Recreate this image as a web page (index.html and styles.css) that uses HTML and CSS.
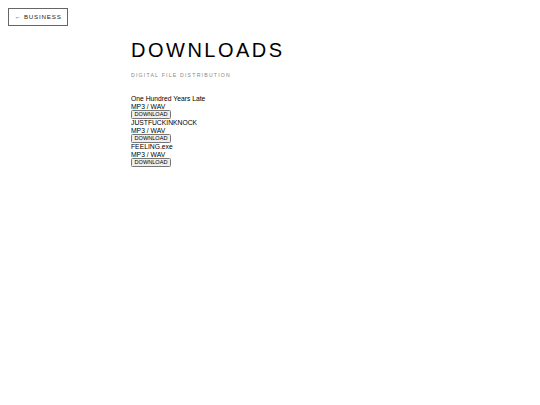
FILE: index.html
```html
<!DOCTYPE html>
<html>
<head>
    <title>Downloads</title>
    <link rel="stylesheet" href="styles.css">
</head>
<body>
    <a class="back" href="#">&larr; BUSINESS</a>

    <div class="page">
        <h1>DOWNLOADS</h1>
        <p class="subtitle">DIGITAL FILE DISTRIBUTION</p>

        <div class="files">
            <div class="file">
                <div>One Hundred Years Late</div>
                <div>MP3 / WAV</div>
                <button>DOWNLOAD</button>
            </div>
            <div class="file">
                <div>JUSTFUCKINKNOCK</div>
                <div>MP3 / WAV</div>
                <button>DOWNLOAD</button>
            </div>
            <div class="file">
                <div>FEELING.exe</div>
                <div>MP3 / WAV</div>
                <button>DOWNLOAD</button>
            </div>
        </div>
    </div>
</body>
</html>
```

FILE: styles.css
```css
body {
    font-family: "Liberation Sans", Arial, sans-serif;
    font-size: 6.75px;
    color: #000;
    background-color: #fff;
    margin: 0;
    padding: 8px 0 0 8px;
}
.back {
    display: inline-block;
    width: 60px;
    height: 18px;
    box-sizing: border-box;
    border: 1px solid #666;
    color: #222;
    text-decoration: none;
    font-size: 6.2px;
    letter-spacing: 0.8px;
    line-height: 16px;
    text-align: center;
}
.page {
    width: 278px;
    margin: 0 auto;
    padding-right: 8px;
}
h1 {
    font-size: 20px;
    font-weight: normal;
    letter-spacing: 2.5px;
    margin: 12px 0 0 0;
    line-height: 24px;
}
.subtitle {
    font-size: 5.2px;
    letter-spacing: 1.2px;
    color: #888;
    margin: 10px 0 17px 0;
}
.file div {
    line-height: 7.5px;
}
button {
    font-family: "Liberation Sans", Arial, sans-serif;
    font-size: 5.6px;
    line-height: 7px;
    background-color: #efefef;
    border: 1px solid #767676;
    border-radius: 1.5px;
    padding: 0 2.5px;
    color: #000;
    display: block;
}
```
